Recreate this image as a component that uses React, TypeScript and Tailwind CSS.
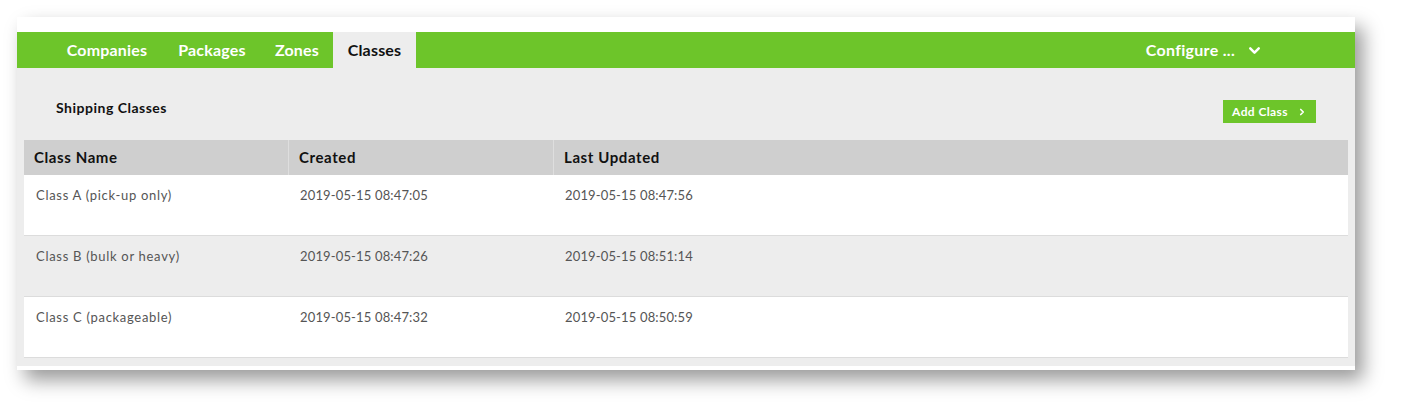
import { ChevronDown, ChevronRight } from "lucide-react";

interface ShippingClass {
  name: string;
  created: string;
  updated: string;
}

const classes: ShippingClass[] = [
  { name: "Class A (pick-up only)", created: "2019-05-15 08:47:05", updated: "2019-05-15 08:47:56" },
  { name: "Class B (bulk or heavy)", created: "2019-05-15 08:47:26", updated: "2019-05-15 08:51:14" },
  { name: "Class C (packageable)", created: "2019-05-15 08:47:32", updated: "2019-05-15 08:50:59" },
];

const tabs = [
  { label: "Companies", width: "w-[112px]" },
  { label: "Packages", width: "w-[98px]" },
  { label: "Zones", width: "w-[72px]" },
  { label: "Classes", width: "w-[83px]" },
];

export default function App() {
  return (
    <div className="min-h-screen bg-white pt-[17px] pl-[17px] font-['Lato',sans-serif]">
      <div className="w-[1338px] h-[353px] bg-white pt-[15px] pb-[4px] flex flex-col shadow-[8px_10px_18px_rgba(0,0,0,0.4)]">
        {/* Top Navigation */}
        <nav className="h-[36px] bg-[#6dc52a] flex items-stretch pl-[34px] pr-[92px]">
          {tabs.map((tab) => {
            const active = tab.label === "Classes";
            return (
              <div
                key={tab.label}
                className={`${tab.width} flex items-center justify-center text-[16px] font-bold tracking-[0.2px] ${
                  active ? "bg-[#ededed] text-[#111]" : "text-white"
                }`}
              >
                {tab.label}
              </div>
            );
          })}
          <div className="ml-auto flex items-center gap-[11px] text-white text-[16px] font-bold tracking-[0.3px]">
            <span>Configure ...</span>
            <ChevronDown className="w-[17px] h-[17px]" strokeWidth={3.5} />
          </div>
        </nav>

        {/* Content */}
        <main className="flex-1 bg-[#ededed] px-[7px] flex flex-col">
          <div className="h-[72px] flex items-start justify-between px-[32px]">
            <h2 className="mt-[29px] text-[14px] font-bold tracking-[0.5px] text-[#111]">Shipping Classes</h2>
            <button className="mt-[32px] w-[93px] h-[23px] bg-[#6dc52a] text-white text-[12px] font-bold tracking-[0.4px] flex items-center justify-center gap-[9px]">
              <span>Add Class</span>
              <ChevronRight className="w-[10px] h-[10px]" strokeWidth={4} />
            </button>
          </div>

          <div className="flex flex-col">
            <div className="h-[35px] bg-[#cfcfcf] grid grid-cols-[264px_265px_1fr] text-[15px] font-bold tracking-[0.6px] text-[#111]">
              <div className="flex items-center px-[10px]">Class Name</div>
              <div className="flex items-center px-[10px] border-l border-[#dedede]">Created</div>
              <div className="flex items-center px-[10px] border-l border-[#dedede]">Last Updated</div>
            </div>
            {classes.map((row, i) => (
              <div
                key={row.name}
                className={`h-[61px] grid grid-cols-[264px_265px_1fr] text-[13px] text-[#555] leading-[20px] border-b border-[#dcdcdc] ${
                  i % 2 === 1 ? "bg-[#ededed]" : "bg-white"
                }`}
              >
                <div className="pt-[10px] px-[12px] tracking-[0.7px]">{row.name}</div>
                <div className="pt-[10px] px-[12px] tracking-[0.15px]">{row.created}</div>
                <div className="pt-[10px] px-[12px] tracking-[0.15px]">{row.updated}</div>
              </div>
            ))}
          </div>
        </main>
      </div>
    </div>
  );
}
